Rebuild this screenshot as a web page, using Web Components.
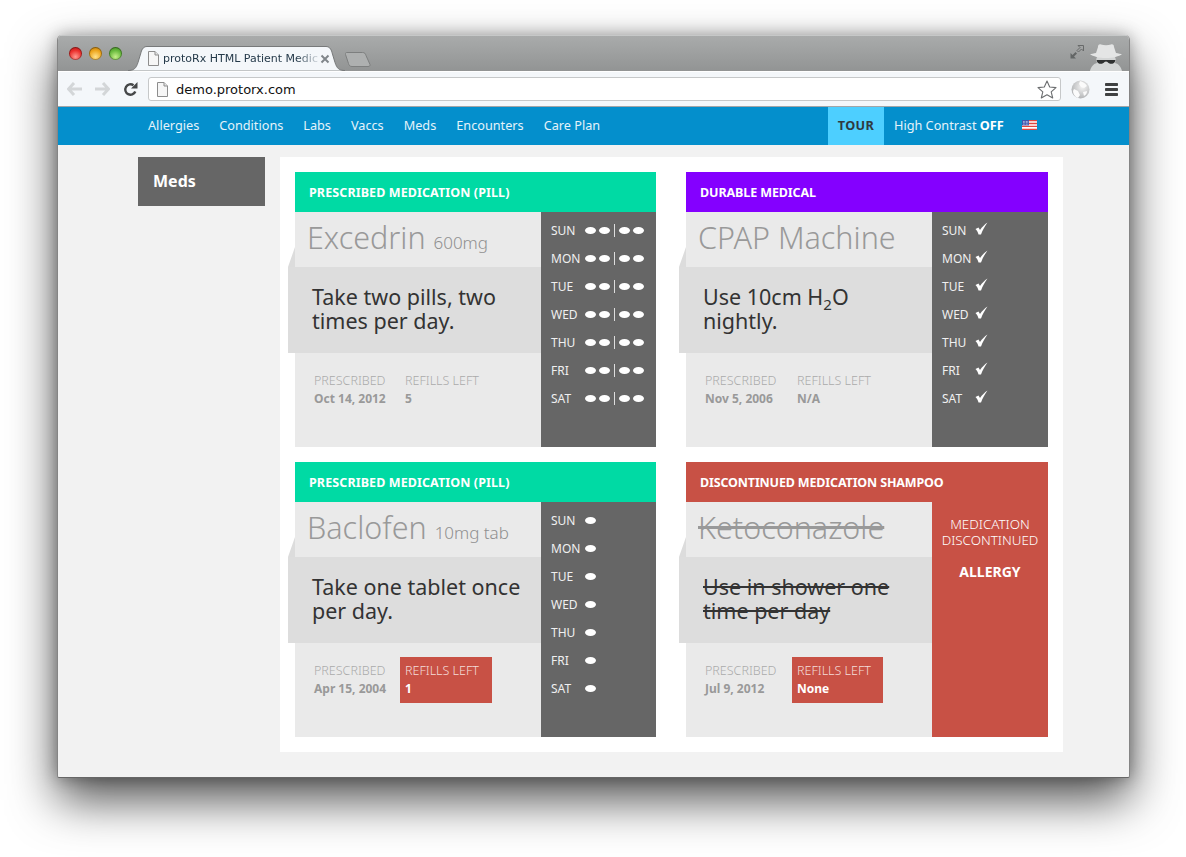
<!DOCTYPE html>
<html lang="en">
<head>
<meta charset="utf-8">
<title>protoRx HTML Patient Medications</title>
<style>
  html, body { margin: 0; background: #fff; }
  body { padding: 35px 56px 0 57px; height: 857px; overflow: hidden; box-sizing: border-box; font-family: "Noto Sans", sans-serif; }
</style>
</head>
<body>
<browser-window tab-title="protoRx HTML Patient Medic" url="demo.protorx.com">
  <top-nav></top-nav>
  <meds-page>
    <med-card kind="pill" label="PRESCRIBED MEDICATION (PILL)" name="Excedrin" dose="600mg" date="Oct 14, 2012" refills="5" doses="4">Take two pills, two times per day.</med-card>
    <med-card kind="durable" label="DURABLE MEDICAL" name="CPAP Machine" date="Nov 5, 2006" refills="N/A" doses="check">Use 10cm H<sub>2</sub>O<br>nightly.</med-card>
    <med-card kind="pill" label="PRESCRIBED MEDICATION (PILL)" name="Baclofen" dose="10mg tab" date="Apr 15, 2004" refills="1" low doses="1">Take one tablet once per day.</med-card>
    <med-card kind="stopped" label="DISCONTINUED MEDICATION SHAMPOO" name="Ketoconazole" date="Jul 9, 2012" refills="None" low reason="ALLERGY"><s>Use in shower one time per day</s></med-card>
  </meds-page>
</browser-window>

<script>
const FONT = '"Noto Sans", "Open Sans", sans-serif';
const docIcon = `<svg width="11" height="15" viewBox="0 0 11 15"><path d="M.5.5h6.500l3.500 3.500v10.500h-10z" fill="#f6f6f6" stroke="#8d8d8d"/><path d="M7 .5v3.500h3.500" fill="#e4e4e4" stroke="#8d8d8d"/></svg>`;

class BrowserWindow extends HTMLElement {
  connectedCallback() {
    const title = this.getAttribute("tab-title");
    const url = this.getAttribute("url");
    this.attachShadow({ mode: "open" }).innerHTML = `
      <style>
        :host {
          display: block;
          width: 1073px;
          height: 743px;
          box-sizing: border-box;
          border: 1px solid #858585;
          border-top: 0;
          border-bottom-color: #666;
          border-radius: 5px 5px 2px 2px;
          box-shadow: 0 22px 48px rgba(0,0,0,.68), 0 0 16px rgba(0,0,0,.3);
          background: #f2f2f2;
          overflow: hidden;
        }
        .titlebar {
          height: 36px;
          box-sizing: border-box;
          background: linear-gradient(#a9abab, #929494);
          border-top: 1px solid #c6c8c8;
          display: flex;
          align-items: flex-start;
          padding: 11px 0 0 11px;
          position: relative;
        }
        .lights { display: flex; gap: 7px; }
        .lights i { width: 13px; height: 13px; border-radius: 50%; box-shadow: inset 0 0 0 1px rgba(0,0,0,.32); }
        .r { background: radial-gradient(circle at 50% 75%, #ff9a90, #ea2e2b 55%, #a81a1c); }
        .y { background: radial-gradient(circle at 50% 75%, #ffe28a, #eda51c 55%, #a8700f); }
        .g { background: radial-gradient(circle at 50% 75%, #c6f08a, #66b93c 55%, #3f7f25); }
        .tab { position: absolute; left: 70px; top: 10px; width: 217px; height: 25px; }
        .tab .shape { position: absolute; left: 0; top: 0; }
        .tab-in { position: absolute; left: 20px; top: 5px; display: flex; align-items: center; gap: 4px; height: 15px; }
        .tab-title {
          font: 11px "DejaVu Sans", sans-serif;
          color: #253a4a;
          white-space: nowrap;
          -webkit-mask-image: linear-gradient(90deg, #000 86%, rgba(0,0,0,.15) 100%);
          mask-image: linear-gradient(90deg, #000 86%, rgba(0,0,0,.15) 100%);
        }
        .close { position: absolute; left: 192px; top: 8px; }
        .newtab { position: absolute; left: 287px; top: 16px; }
        .tr-ico { position: absolute; right: 6px; top: 8px; display: flex; gap: 5px; align-items: flex-start; }
        .tr-ico .expand { margin-top: 1px; }
        .toolbar {
          height: 36px;
          box-sizing: border-box;
          background: #f4f7fa;
          border-top: 1px solid #fff;
          border-bottom: 1px solid #a2a5a7;
          display: flex;
          align-items: center;
          padding: 0 0 0 9px;
        }
        .nav-ico { width: 28px; display: flex; align-items: center; }
        .reload { width: 25px; }
        .omni {
          flex: 0 0 913px;
          height: 24px;
          box-sizing: border-box;
          background: #fff;
          border: 1px solid #c6c8c9;
          border-radius: 3px;
          display: flex;
          align-items: center;
          padding: 0 3px 0 8px;
          gap: 8px;
          font: 13px "DejaVu Sans", sans-serif;
          color: #111;
        }
        .omni span { flex: 1; }
        .ext { margin-left: 10px; display: flex; }
        .menu { margin-left: 15px; display: flex; }
      </style>
      <div class="titlebar">
        <div class="lights"><i class="r"></i><i class="y"></i><i class="g"></i></div>
        <div class="tab">
          <svg class="shape" width="217" height="25" viewBox="0 0 217 25"><path d="M0 24.500c6 0 8-2 10-8l3-10c1-4 3-6 6-6h179c3 0 5 2 6 6l3 10c2 6 4 8 10 8" fill="#f4f7fa" stroke="#77797a"/></svg>
          <div class="tab-in">${docIcon}<div class="tab-title">${title}</div></div>
          <svg class="close" width="10" height="10" viewBox="0 0 10 10"><path d="M1.500 1.500l7 7M8.500 1.500l-7 7" stroke="#80868a" stroke-width="2"/></svg>
        </div>
        <svg class="newtab" width="26" height="15" viewBox="0 0 26 15"><path d="M1.500.5h16c2 0 3 1 3.500 3l4 9c.4 1.200-.5 2-2 2H7c-2 0-3-1-3.500-3L.5 2.500c-.4-1 0-2 1-2z" fill="#aeb0b0" stroke="#7d7f7f"/></svg>
        <div class="tr-ico">
          <svg class="expand" width="14" height="14" viewBox="0 0 14 14"><path d="M8 .5h5.500V6L11.500 4 8.500 7 7 5.500 10 2.500z" fill="none" stroke="#686a6a"/><path d="M6 13.500H.5V8l2 2 3-3 1.500 1.500-3 3z" fill="#636666"/></svg>
          <svg width="34" height="27" viewBox="0 0 34 27"><path d="M8 13C7 15 7 17 8 19 4 20 2 23 1 27H33C32 23 30 20 26 19 27 17 27 15 26 13z" fill="#d3d5d5"/><path d="M9 3C9 1 10 0 12 .5 15 1.500 19 1.500 22 .5 24 0 25 1 25 3L27 9C29 9.500 32 10 33 10 30 12.500 24 14 17 14 10 14 4 12.500 1 10 2 10 5 9.500 7 9z" fill="#e4e5e5"/><path d="M8 16H26C26.500 16 26.500 17 26 17.500 25 20.500 20 20.500 18.500 18 17.800 17.200 16.200 17.200 15.500 18 14 20.500 9 20.500 8 17.500 7.500 17 7.500 16 8 16z" fill="#2f3131"/></svg>
        </div>
      </div>
      <div class="toolbar">
        <span class="nav-ico"><svg width="15" height="14" viewBox="0 0 15 14"><path d="M7 1L1.500 7 7 13M2 7h13" fill="none" stroke="#d3d6d8" stroke-width="3"/></svg></span>
        <span class="nav-ico"><svg width="15" height="14" viewBox="0 0 15 14"><path d="M8 1l5.500 6L8 13M13 7H0" fill="none" stroke="#d3d6d8" stroke-width="3"/></svg></span>
        <span class="nav-ico reload"><svg width="15" height="15" viewBox="0 0 15 15"><path d="M12.300 9.500A5.200 5.200 0 1 1 10.500 3.300" fill="none" stroke="#454748" stroke-width="2.400"/><path d="M8 6.500L14.500 6.500 14.500 0z" fill="#454748"/></svg></span>
        <div class="omni">${docIcon}<span>${url}</span>
          <svg width="20" height="19" viewBox="0 0 20 19"><path d="M10 1l2.700 6 6.300.6-4.800 4.200 1.500 6.200L10 14.700 4.300 18l1.500-6.200L1 7.600 7.300 7z" fill="#fff" stroke="#6c6e70" stroke-width="1.100" stroke-linejoin="round"/></svg>
        </div>
        <span class="ext"><svg width="19" height="19" viewBox="0 0 19 19"><defs><radialGradient id="gl" cx=".6" cy=".35" r=".75"><stop offset="0" stop-color="#f4f4f4"/><stop offset="1" stop-color="#a9abad"/></radialGradient></defs><circle cx="9.500" cy="9.500" r="9" fill="url(#gl)"/><path d="M9 1c3 1 5 2 7 5l-3 2-3-1-2-3zM3 9l4 2 2 4-2 3c-3-1-5-4-5-7zM12 12l4-1c0 2-1 4-3 5z" fill="#fbfbfb"/></svg></span>
        <span class="menu"><svg width="13" height="13" viewBox="0 0 13 13"><rect width="13" height="3" rx=".8" fill="#3f4142"/><rect y="5" width="13" height="3" rx=".8" fill="#3f4142"/><rect y="10" width="13" height="3" rx=".8" fill="#3f4142"/></svg></span>
      </div>
      <slot></slot>`;
  }
}

class TopNav extends HTMLElement {
  connectedCallback() {
    const links = ["Allergies", "Conditions", "Labs", "Vaccs", "Meds", "Encounters", "Care Plan"];
    let stars = "";
    for (let r = 0; r < 3; r++) for (let c = 0; c < 4; c++) stars += `<rect x="${1 + c * 1.5}" y="${1 + r * 1.4}" width=".7" height=".7" fill="#fff"/>`;
    this.attachShadow({ mode: "open" }).innerHTML = `
      <style>
        :host {
          display: flex;
          height: 38px;
          background: #048fcc;
          align-items: center;
          padding-left: 90px;
          font: 12.700px ${FONT};
          color: #e4f3fa;
        }
        nav { display: flex; gap: 20px; margin-top: -2px; }
        .tour {
          margin-left: auto;
          align-self: stretch;
          width: 56px;
          box-sizing: border-box;
          padding-bottom: 2px;
          display: flex; align-items: center; justify-content: center;
          background: #4dcfff;
          color: #2f3a40;
          font-weight: 700;
          letter-spacing: .4px;
        }
        .contrast { margin: -2px 0 0 10px; width: 128px; }
        b { color: #fff; }
        svg { margin: -3px 92px 0 0; }
      </style>
      <nav>${links.map(l => `<span>${l}</span>`).join("")}</nav>
      <span class="tour">TOUR</span>
      <span class="contrast">High Contrast <b>OFF</b></span>
      <svg width="15" height="10" viewBox="0 0 15 10"><rect width="15" height="10" fill="#fff"/><path d="M0 .7h15M0 3.500h15M0 6.400h15M0 9.300h15" stroke="#e2453f" stroke-width="1.300"/><rect width="7" height="5.400" fill="#3d56b0"/>${stars}</svg>`;
  }
}

class MedsPage extends HTMLElement {
  connectedCallback() {
    this.attachShadow({ mode: "open" }).innerHTML = `
      <style>
        :host {
          display: flex;
          align-items: flex-start;
          gap: 15px;
          padding: 12px 0 0 80px;
          font-family: ${FONT};
        }
        h2 {
          margin: 0;
          width: 127px;
          height: 49px;
          box-sizing: border-box;
          background: #666;
          color: #fff;
          padding-left: 15px;
          font-size: 16px;
          font-weight: 700;
          line-height: 48px;
        }
        .panel {
          background: #fff;
          padding: 15px;
          display: grid;
          grid-template-columns: 361px 362px;
          gap: 15px 30px;
        }
      </style>
      <h2>Meds</h2>
      <div class="panel"><slot></slot></div>`;
  }
}

const KINDS = {
  pill: { color: "#00daa4", spacing: ".1px", when: 86, box: 92 },
  durable: { color: "#8400ff", spacing: "-.1px", when: 87, box: 91 },
  stopped: { color: "#c85145", spacing: "-.15px", when: 87, box: 91 },
};

class MedCard extends HTMLElement {
  connectedCallback() {
    const a = n => this.getAttribute(n);
    const kind = KINDS[a("kind")];
    const stopped = a("kind") === "stopped";
    const dose = a("dose") ? ` <small>${a("dose")}</small>` : "";
    const side = stopped
      ? `<div class="reason">MEDICATION<br>DISCONTINUED<b>${a("reason")}</b></div>`
      : `<dose-week doses="${a("doses")}"></dose-week>`;
    this.attachShadow({ mode: "open" }).innerHTML = `
      <style>
        :host {
          display: block;
          height: 275px;
          font-family: ${FONT};
          --accent: ${kind.color};
        }
        header {
          height: 40px;
          box-sizing: border-box;
          background: var(--accent);
          color: #fff;
          padding-left: 14px;
          font-size: 12.500px;
          font-weight: 700;
          letter-spacing: ${kind.spacing};
          line-height: 41px;
        }
        .body { display: grid; grid-template-columns: 246px 1fr; height: 235px; }
        .main { background: #eaeaea; }
        .name {
          height: 55px;
          box-sizing: border-box;
          padding-left: 12px;
          font-size: 30.500px;
          font-weight: 300;
          line-height: 51px;
          color: #999;
          white-space: nowrap;
          ${stopped ? "text-decoration: line-through;" : ""}
        }
        small { font-size: 17px; font-weight: 300; color: #8f8f8f; }
        .instr {
          position: relative;
          margin-left: -7px;
          height: 86px;
          box-sizing: border-box;
          background: #ddd;
          padding: 18px 10px 0 24px;
          font-size: 21.500px;
          line-height: 24px;
          color: #333;
        }
        .instr::before {
          content: "";
          position: absolute;
          left: 0; top: -20px;
          width: 7px; height: 20px;
          background: #dcdcdc;
          clip-path: polygon(0 100%, 100% 0, 100% 100%);
        }
        ::slotted(sub) { font-size: 15px; line-height: 0; }
        .meta { display: flex; padding-top: 19px; padding-left: 19px; }
        .col { font-size: 12.500px; line-height: 18px; color: #aaa; font-weight: 300; }
        .col b { display: block; font-size: 12px; font-weight: 700; color: #999; white-space: nowrap; }
        .when { width: ${kind.when}px; flex: none; white-space: nowrap; }
        .refills { box-sizing: border-box; height: 46px; padding: 5px 9px 0 5px; min-width: ${kind.box}px; white-space: nowrap; margin-top: -5px; }
        .refills.low { background: #c85145; color: #f4dcd9; }
        .refills.low b { color: #fff; }
        .side { background: #666; }
        .side.stopped { background: var(--accent); }
        .reason { text-align: center; color: #fff; font-size: 13.400px; line-height: 16px; font-weight: 300; padding-top: 14px; }
        .reason b { display: block; margin-top: 16px; font-weight: 700; font-size: 14px; }
      </style>
      <header>${a("label")}</header>
      <div class="body">
        <div class="main">
          <div class="name">${a("name")}${dose}</div>
          <div class="instr"><slot></slot></div>
          <div class="meta">
            <div class="col when">PRESCRIBED<b>${a("date")}</b></div>
            <div class="col refills${this.hasAttribute("low") ? " low" : ""}">REFILLS LEFT<b>${a("refills")}</b></div>
          </div>
        </div>
        <div class="side${stopped ? " stopped" : ""}">${side}</div>
      </div>`;
  }
}

class DoseWeek extends HTMLElement {
  connectedCallback() {
    const doses = this.getAttribute("doses");
    const days = ["SUN", "MON", "TUE", "WED", "THU", "FRI", "SAT"];
    const mark = doses === "check"
      ? `<svg class="chk" width="13" height="13" viewBox="0 0 13 13"><path d="M.5 7L3.500 5.500 5 8C7 5 9.500 2.500 12.500.5 10 4 7.500 8 6 12.500H3.500C3 10.500 2 8.500.5 7z" fill="#fff"/></svg>`
      : doses === "4"
        ? `<i></i><i></i><u></u><i></i><i></i>`
        : `<i></i>`;
    this.attachShadow({ mode: "open" }).innerHTML = `
      <style>
        :host {
          display: block;
          padding: 4px 0 0 10px;
          font: 400 12px ${FONT};
          color: #f0f0f0;
        }
        .row { display: flex; align-items: center; height: 28px; }
        .d { width: 34px; flex: none; }
        .m { display: flex; align-items: center; gap: 3px; }
        i { width: 11px; height: 7px; border-radius: 50%; background: #fff; }
        u { width: 1px; height: 13px; background: #ddd; margin: 0 1px; }
        .chk { margin: -3px 0 0 -1px; }
      </style>
      ${days.map(d => `<div class="row"><span class="d">${d}</span><span class="m">${mark}</span></div>`).join("")}`;
  }
}

customElements.define("browser-window", BrowserWindow);
customElements.define("top-nav", TopNav);
customElements.define("meds-page", MedsPage);
customElements.define("med-card", MedCard);
customElements.define("dose-week", DoseWeek);
</script>
</body>
</html>
